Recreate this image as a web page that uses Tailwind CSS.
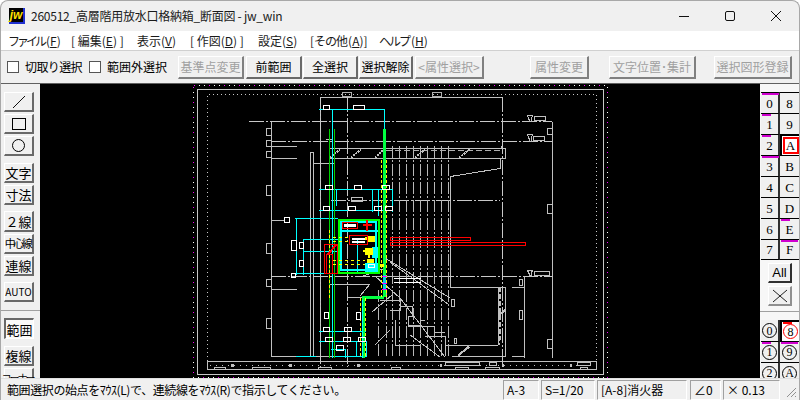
<!DOCTYPE html>
<html lang="ja">
<head>
  <meta charset="UTF-8" />
  <title>jw_win</title>
  <script src="https://cdn.jsdelivr.net/npm/@tailwindcss/browser@4"></script>
</head>
<body class="w-[800px] h-[400px] overflow-hidden bg-white text-black font-['Noto_Sans_CJK_JP','Liberation_Sans',sans-serif]">
  <div class="w-[800px] h-[400px] flex flex-col overflow-hidden rounded-t-lg border-t border-l border-r border-[#a8a8a8] bg-[#f0f0f0]">

    <!-- Title bar -->
    <div class="h-[30px] flex items-center shrink-0">
      <div class="ml-2 w-[16px] h-[16px] bg-black border-r-2 border-b-2 border-[#2030d0] flex items-center justify-center text-[12px] leading-none font-bold italic text-[#ffe000] font-['Liberation_Sans',sans-serif]">jw</div>
      <div class="ml-[6px] text-[12px] tracking-[-0.25px] leading-none text-[#1a1a1a]">260512_高層階用放水口格納箱_断面図 - jw_win</div>
      <div class="ml-auto flex items-center">
        <svg class="w-[46px] h-[30px]" viewBox="0 0 46 30"><path d="M18 15.5h10" stroke="#111" fill="none" /></svg>
        <svg class="w-[46px] h-[30px]" viewBox="0 0 46 30"><rect x="18.5" y="10.5" width="9" height="9" rx="1.5" stroke="#111" fill="none" /></svg>
        <svg class="w-[46px] h-[30px]" viewBox="0 0 46 30"><path d="M18 10l10 10M28 10l-10 10" stroke="#111" fill="none" /></svg>
      </div>
    </div>

    <!-- Menu -->
    <div class="h-[20px] bg-white flex items-center shrink-0 text-[12px] leading-none text-[#1a1a1a] border-b border-[#d0d0d0]">
      <span class="ml-[7px] w-[48px] whitespace-nowrap"><span class="tracking-[-3px]">ファイル</span><span class="ml-[2px]">(<u>F</u>)</span></span>
      <span class="ml-[15px] w-[51px] whitespace-nowrap">[ 編集(<u>E</u>) ]</span>
      <span class="ml-[15px] w-[37px] whitespace-nowrap">表示(<u>V</u>)</span>
      <span class="ml-[16px] w-[52px] whitespace-nowrap">[ 作図(<u>D</u>) ]</span>
      <span class="ml-[16px] w-[37px] whitespace-nowrap">設定(<u>S</u>)</span>
      <span class="ml-[15px] w-[53px] whitespace-nowrap">[<span class="tracking-[-1px]">その</span>他(<u>A</u>)]</span>
      <span class="ml-[16px] whitespace-nowrap"><span class="tracking-[-2px]">ヘルプ</span><span class="ml-[2px]">(<u>H</u>)</span></span>
    </div>

    <!-- Toolbar -->
    <div class="h-[33px] flex items-center shrink-0 text-[12px] leading-none border-b border-[#606060]">
      <div class="ml-[6px] w-[12px] h-[12px] bg-white border border-[#555]"></div>
      <span class="ml-[6px] w-[64px] whitespace-nowrap tracking-[-0.6px]">切取り選択</span>
      <div class="w-[12px] h-[12px] bg-white border border-[#555]"></div>
      <span class="ml-[6px] w-[71px] whitespace-nowrap">範囲外選択</span>
      <div class="w-[66px] h-[23px] flex items-center justify-center text-[#a0a0a0] border-t border-l border-white border-r-2 border-b-2 border-r-[#808080] border-b-[#808080]">基準点変更</div>
      <div class="ml-[2px] w-[56px] h-[23px] flex items-center justify-center border-t border-l border-white border-r-2 border-b-2 border-r-[#696969] border-b-[#696969]">前範囲</div>
      <div class="ml-[1px] w-[55px] h-[23px] flex items-center justify-center border-t border-l border-white border-r-2 border-b-2 border-r-[#696969] border-b-[#696969]">全選択</div>
      <div class="ml-[1px] w-[54px] h-[23px] flex items-center justify-center border-t border-l border-white border-r-2 border-b-2 border-r-[#696969] border-b-[#696969] whitespace-nowrap">選択解除</div>
      <div class="ml-[2px] w-[69px] h-[23px] flex items-center justify-center text-[#a0a0a0] border-t border-l border-white border-r-2 border-b-2 border-r-[#808080] border-b-[#808080] whitespace-nowrap">&lt;属性選択&gt;</div>
      <div class="ml-[46px] w-[59px] h-[23px] flex items-center justify-center text-[#a0a0a0] border-t border-l border-white border-r-2 border-b-2 border-r-[#808080] border-b-[#808080]">属性変更</div>
      <div class="ml-[20px] w-[87px] h-[23px] flex items-center justify-center text-[#a0a0a0] border-t border-l border-white border-r-2 border-b-2 border-r-[#808080] border-b-[#808080] whitespace-nowrap">文字位置･集計</div>
      <div class="ml-[18px] w-[78px] h-[23px] flex items-center justify-center text-[#a0a0a0] border-t border-l border-white border-r-2 border-b-2 border-r-[#808080] border-b-[#808080] whitespace-nowrap">選択図形登録</div>
    </div>

    <!-- Main -->
    <div class="flex h-[294px] shrink-0 overflow-hidden">

      <!-- Left tools -->
      <div class="w-[39px] shrink-0 flex flex-col items-start pl-[3px] pt-[8px] text-[13px] leading-none overflow-hidden *:shrink-0">
        <div class="w-[30px] h-[20px] flex items-center justify-center border-t border-l border-white border-r-2 border-b-2 border-r-[#696969] border-b-[#696969]">
          <svg class="w-[14px] h-[14px]" viewBox="0 0 14 14"><path d="M1 13L13 1" stroke="#111" fill="none" /></svg>
        </div>
        <div class="mt-[2px] w-[30px] h-[20px] flex items-center justify-center border-t border-l border-white border-r-2 border-b-2 border-r-[#696969] border-b-[#696969]">
          <div class="w-[14px] h-[12px] border border-black"></div>
        </div>
        <div class="mt-[2px] w-[30px] h-[20px] flex items-center justify-center border-t border-l border-white border-r-2 border-b-2 border-r-[#696969] border-b-[#696969]">
          <div class="w-[13px] h-[13px] rounded-full border border-black"></div>
        </div>
        <div class="mt-[7px] w-[30px] h-[20px] flex items-center justify-center border-t border-l border-white border-r-2 border-b-2 border-r-[#696969] border-b-[#696969]">文字</div>
        <div class="mt-[2px] w-[30px] h-[20px] flex items-center justify-center border-t border-l border-white border-r-2 border-b-2 border-r-[#696969] border-b-[#696969]">寸法</div>
        <div class="mt-[6px] w-[30px] h-[21px] flex items-center justify-center border-t border-l border-white border-r-2 border-b-2 border-r-[#696969] border-b-[#696969]">２線</div>
        <div class="mt-[2px] w-[30px] h-[20px] flex items-center justify-center border-t border-l border-white border-r-2 border-b-2 border-r-[#696969] border-b-[#696969] text-[11px] tracking-[-2.5px] whitespace-nowrap pr-[2px]">中心線</div>
        <div class="mt-[2px] w-[30px] h-[20px] flex items-center justify-center border-t border-l border-white border-r-2 border-b-2 border-r-[#696969] border-b-[#696969]">連線</div>
        <div class="mt-[6px] w-[30px] h-[20px] flex items-center justify-center border-t border-l border-white border-r-2 border-b-2 border-r-[#696969] border-b-[#696969] text-[10px] whitespace-nowrap">AUTO</div>
        <div class="mt-[8px] -ml-[3px] w-[39px] h-[1px] bg-[#a0a0a0]"></div>
        <div class="mt-[7px] w-[30px] h-[21px] flex items-center justify-center bg-[#fafafa] border-t-2 border-l-2 border-t-[#696969] border-l-[#696969] border-r border-b border-white">範囲</div>
        <div class="mt-[7px] w-[30px] h-[20px] flex items-center justify-center border-t border-l border-white border-r-2 border-b-2 border-r-[#696969] border-b-[#696969]">複線</div>
        <div class="mt-[2px] w-[30px] h-[20px] flex items-center justify-center border-t border-l border-white border-r-2 border-b-2 border-r-[#696969] border-b-[#696969] text-[10px] tracking-[-2px] whitespace-nowrap pr-[2px]">コーナー</div>
      </div>

      <!-- Drawing -->
      <svg class="w-[720px] h-[294px] shrink-0 bg-black" viewBox="40 84 720 294" shape-rendering="crispEdges" fill="none">
        <!-- sheet frame -->
        <rect x="193.5" y="85.5" width="414" height="292" stroke="#fff" stroke-dasharray="1 4" />
        <rect x="193.5" y="85.5" width="414" height="292" stroke="#f0f" stroke-dasharray="1 14" />
        <rect x="197.5" y="89.5" width="406" height="285" stroke="#c8c8c8" />
        <path d="M207.5 361V94.5H596.5V361" stroke="#c8c8c8" stroke-dasharray="1 3" />

        <!-- title strip -->
        <rect x="207.5" y="361.5" width="389" height="8" stroke="#c0c0c0" />
        <path d="M210 365.5H594" stroke="#c0c0c0" stroke-dasharray="1 5" />
        <path d="M214.5 369v-2h11v2M252.5 369v-2h18v2M318.5 369v-2h13v2M391.5 369v-2h9v2M455.5 369v-2h13v2M485.5 369v-2h14v2M580.5 369v-2h7v2M445.5 362.5h34v3h-34zM489.5 362.5h7v3h-7zM577.5 362.5h13v3h-13z" stroke="#c0c0c0" />
        <path d="M231 364h3v3h-3zM289 364h3v3h-3zM357 364h3v3h-3zM440 364h2v3h-2zM502 364h2v3h-2zM570 364h2v3h-2z" fill="#c0c0c0" />
        <rect x="342.5" y="92.5" width="9" height="3.5" stroke="#b0b0b0" />
        <rect x="432.5" y="92.5" width="9" height="3.5" stroke="#b0b0b0" />

        <!-- gray outline: solid -->
        <path d="M320.5 97.5H502.5M271.5 121.5V356M552.5 121.5V358M271 146.5H297M271 158.5H297M271 289.5H297M271 220.5H284M271 356.5H362M310 356V152.5H313.5V356M313.5 163.5H335M330 148.5H505.5V158.5H330M501.5 148.5V146M505.5 148.5V158.5M500 158.5V168.5L450.5 176.5V287M524.5 276V358M512 287.5H524.5M512 356.5H524.5M450 287.5H505.5V356.5H452M445 345.5H498M445 345.5V356M498 287V345M458 356L470 347M326 139H332V158M320.5 97.5V356" stroke="#c0c0c0" />
        <path d="M266.5 128.5h5v7h-5zM266.5 140.5h5v6h-5zM266.5 151.5h5v6h-5zM266.5 185.5h5v10h-5zM266.5 243.5h5v10h-5zM266.5 279.5h5v7h-5zM266.5 318.5h5v10h-5zM547.5 128.5h5v6h-5zM547.5 204.5h5v9h-5zM547.5 339.5h5v9h-5zM519.5 279.5h3v6h-3zM519.5 310.5h3v9h-3zM351.5 197.5h11v4h-11zM454.5 338.5h2v5h-2z" stroke="#c0c0c0" />

        <!-- dash-dot grid lines -->
        <path d="M249 121.5H552M271 141.5H552M271 276.5H552M502.5 97V367M320.5 97V367M347.5 97V367M331 200.5H500" stroke="#c8c8c8" stroke-dasharray="15 2 2 2" />

        <!-- level marks -->
        <path d="M527.5 115.5h5l-1.5 4v2h-2v-2zM527.5 134.5h5l-1.5 4v3h-2v-3zM527.5 270.5h5l-1.5 3v2h-2v-2z" stroke="#c0c0c0" />
        <path d="M534.5 116.5h11v3.5h-11zM533.5 136.5h11v3.5h-11zM534.5 271.5h15v3.5h-15z" stroke="#c0c0c0" />

        <!-- stairs -->
        <path d="M399.5 146V358M406.5 146V358M413.5 146V358M420.5 146V358M427.5 146V358M434.5 146V358M441.5 146V358M448.5 146V358M392.5 146V358M378.5 290V358M386.5 290V358" stroke="#b8b8b8" stroke-dasharray="12 2 2 2" />
        <path d="M386 150.5H500" stroke="#b0b0b0" stroke-dasharray="6 3" />
        <path d="M415 158L425 149M459 158L470 149M351 158L361 149M330 158L340 149M375 158L383 150" stroke="#c0c0c0" stroke-width="2" stroke-dasharray="2 1" />
        <path d="M385 258L450 298M400 298L445 357M375 276L400 298M390 262L448 304" stroke="#c0c0c0" />
        <path d="M400.5 306H412V316H408V325H420V320H425V320M408 326H434M434 326V332H445M425 336H445V345M395 320V345H420M380 300H400V310H390M410 335L440 357M363 276L383 269M400 276H372M330 284H370M370 284L360 296M348 297H380M392 295L372 312M390 330L375 345" stroke="#c0c0c0" />
        <path d="M500 287V340M499 287V345" stroke="#c0c0c0" stroke-dasharray="5 2" />
        <path d="M498 316L505 310M458 356L469 346" stroke="#c0c0c0" stroke-width="2" />
        <path d="M451 299h3v7h-3z" stroke="#c0c0c0" />
        <path d="M393.5 278.5h27M393.5 282.5h27" stroke="#fff" />

        <!-- cyan pipes -->
        <path d="M319 109.5H384.5M332.5 109.5V358M384.5 109.5V210M319 189.5H392M319 210.5H392M295 218.5H338M296.5 218.5V275M303.5 239.5V275M303 239.5H338M303 251.5H338M296 273.5H338M319 331.5H366M319 341.5H366M331 349.5H346M335 356.5H366M296 356.5H316M345.5 349V358M356.5 341V356M366.5 341V357M378.5 189V216M392.5 189V212M336.5 189V206M372.5 190V212M357 240V272" stroke="#00ffff" />
        <path d="M338 231H378" stroke="#00ffff" stroke-width="2" />

        <!-- green -->
        <path d="M329.5 129V358M334.5 129V358" stroke="#00d000" />
        <path d="M384 129V297" stroke="#00ff40" stroke-width="3" />
        <path d="M384 297H363V358" stroke="#00ff40" stroke-width="3" />
        <path d="M362.5 300V358" stroke="#00ffff" />
        <path d="M338.5 219.5H378.5V272.5H338.5Z" stroke="#00ff00" stroke-width="2" />
        <path d="M341 222H376V270H341Z" stroke="#00ffff" stroke-width="2" />

        <!-- cyan fills -->
        <path d="M372 247h6v11h-6zM365 263h13v9h-13z" fill="#00ffff" />
        <path d="M380 264h4v3h-4z" fill="#ffff00" />

        <!-- yellow dashed -->
        <path d="M381.5 160V297M386.5 160V297M329.5 230V300M360 298V358M365.5 298V358" stroke="#ffff00" stroke-dasharray="3 2" />
        <path d="M333 237.5H350M333 241.5H350M333 260.5H365M333 264.5H365" stroke="#ffff00" stroke-dasharray="3 3" />
        <path d="M367 236h8v6h-8zM365 248h8v7h-8zM363 250h2v2h-2zM367 259h7v4h-7zM368 255h2v3h-2zM365 237h2v3h-2z" fill="#ffff00" />

        <!-- magenta joint -->
        <path d="M383 275h3v15h-3z" fill="#00c8e8" />
        <path d="M382 276H387M382 283H387M382 289H387" stroke="#ff00ff" />

        <!-- red -->
        <path d="M342.5 222.5h15v6h-15zM349.5 235.5h18v9h-18zM324.5 244.5h13v29h-13zM326.5 254.5h6v19h-6zM390.5 237.5h80v3h-80zM390.5 242.5h135v3h-135z" stroke="#ff0000" />
        <path d="M363 224.5H372M366.5 220V231M337 244L328 254" stroke="#ff0000" stroke-width="2" />

        <!-- white fixtures -->
        <path d="M344 224h12v3h-12zM352 238h13v2h-13zM352 241h13v2h-13z" fill="#fff" />
        <path d="M323.5 105.5h6v4h-6zM353.5 105.5h11v4h-11zM325.5 185.5h7v4h-7zM354.5 185.5h7v4h-7zM382.5 185.5h7v4h-7zM323.5 206.5h6v4h-6zM348.5 206.5h7v4h-7zM374.5 206.5h7v4h-7zM385.5 206.5h7v4h-7zM284.5 217.5h5v5h-5zM291.5 240.5h5v10h-5zM299.5 242.5h4v6h-4zM299.5 260.5h4v6h-4zM291.5 273.5h4v4h-4zM324.5 312.5h4v6h-4zM356.5 312.5h4v7h-4zM323.5 327.5h6v4h-6zM344.5 327.5h7v4h-7zM325.5 337.5h7v4h-7zM343.5 337.5h7v4h-7zM358.5 337.5h7v4h-7zM336.5 345.5h7v5h-7zM368.5 264.5h6v3h-6z" stroke="#fff" />
      </svg>

      <!-- Right layers -->
      <div class="flex-1 bg-[#f7f7f7] pt-[8px] pl-[1px] flex flex-col text-[13px] leading-none font-['Liberation_Serif','Noto_Sans_CJK_JP',serif] overflow-hidden *:shrink-0">
        <div class="grid grid-cols-[19px_19px] auto-rows-[21px]">
          <div class="relative flex items-center justify-center bg-[#f0f0f0] border-t border-black border-r-2 border-r-[#303030]"><span class="absolute left-[1px] top-0 w-[17px] h-[2px] bg-[#d000d0]"></span>0</div>
          <div class="flex items-center justify-center bg-[#f0f0f0] border-t border-black">8</div>
          <div class="relative flex items-center justify-center bg-[#f0f0f0] border-t border-black border-r-2 border-r-[#303030]"><span class="absolute left-[1px] top-0 w-[9px] h-[2px] bg-[#d000d0]"></span>1</div>
          <div class="flex items-center justify-center bg-[#f0f0f0] border-t border-black">9</div>
          <div class="relative flex items-center justify-center bg-[#f0f0f0] border-t border-black border-r-2 border-r-[#303030]"><span class="absolute left-[1px] top-0 w-[9px] h-[2px] bg-[#d000d0]"></span>2</div>
          <div class="flex items-center justify-center bg-white border-t-2 border-l-2 border-black"><span class="w-[16px] h-[17px] flex items-center justify-center border-2 border-[#f00]">A</span></div>
          <div class="relative flex items-center justify-center bg-[#f0f0f0] border-t border-black border-r-2 border-r-[#303030]"><span class="absolute left-[1px] top-0 w-[17px] h-[2px] bg-[#d000d0]"></span>3</div>
          <div class="flex items-center justify-center bg-[#f0f0f0] border-t border-black">B</div>
          <div class="flex items-center justify-center bg-[#f0f0f0] border-t border-black border-r-2 border-r-[#303030]">4</div>
          <div class="flex items-center justify-center bg-[#f0f0f0] border-t border-black">C</div>
          <div class="flex items-center justify-center bg-[#f0f0f0] border-t border-black border-r-2 border-r-[#303030]">5</div>
          <div class="flex items-center justify-center bg-[#f0f0f0] border-t border-black">D</div>
          <div class="flex items-center justify-center bg-[#f0f0f0] border-t border-black border-r-2 border-r-[#303030]">6</div>
          <div class="relative flex items-center justify-center bg-[#f0f0f0] border-t border-black"><span class="absolute left-[1px] top-0 w-[9px] h-[2px] bg-[#d000d0]"></span>E</div>
          <div class="flex items-center justify-center bg-[#f0f0f0] border-t border-b border-black border-r-2 border-r-[#303030]">7</div>
          <div class="relative flex items-center justify-center bg-[#f0f0f0] border-t border-b border-black"><span class="absolute left-[1px] top-0 w-[17px] h-[2px] bg-[#d000d0]"></span>F</div>
        </div>
        <div class="mt-[3px] ml-[7px] w-[24px] h-[20px] flex items-center justify-center bg-[#f0f0f0] border-t border-l border-white border-r-2 border-b-2 border-r-[#303030] border-b-[#303030] font-['Liberation_Sans',sans-serif] text-[13px]">All</div>
        <div class="mt-[3px] ml-[7px] w-[24px] h-[20px] flex items-center justify-center bg-[#f0f0f0] border-t border-l border-white border-r-2 border-b-2 border-r-[#909090] border-b-[#909090]">
          <svg class="w-[14px] h-[14px]" viewBox="0 0 14 14"><path d="M0 1L14 13M14 1L0 13" stroke="#222" fill="none" /></svg>
        </div>
        <div class="mt-[5px] -ml-[1px] h-[1px] bg-[#a0a0a0]"></div>
        <div class="mt-[8px] grid grid-cols-[19px_19px] auto-rows-[21px]">
          <div class="flex items-center justify-center bg-[#f0f0f0] border-r-2 border-r-[#303030]"><span class="w-[15px] h-[15px] rounded-full border border-black flex items-center justify-center text-[12px]">0</span></div>
          <div class="relative flex items-center justify-center bg-white border-t-2 border-l-2 border-black"><span class="absolute left-[1px] top-0 w-[9px] h-[2px] bg-[#f00]"></span><span class="w-[15px] h-[15px] rounded-full border border-[#f00] flex items-center justify-center text-[12px]">8</span></div>
          <div class="relative flex items-center justify-center bg-[#f0f0f0] border-t border-black border-r-2 border-r-[#303030]"><span class="absolute left-[1px] top-0 w-[9px] h-[2px] bg-[#d000d0]"></span><span class="w-[15px] h-[15px] rounded-full border border-black flex items-center justify-center text-[12px]">1</span></div>
          <div class="relative flex items-center justify-center bg-[#f0f0f0] border-t border-black"><span class="absolute left-[1px] top-0 w-[17px] h-[2px] bg-[#d000d0]"></span><span class="w-[15px] h-[15px] rounded-full border border-black flex items-center justify-center text-[12px]">9</span></div>
          <div class="flex items-center justify-center bg-[#f0f0f0] border-t border-black border-r-2 border-r-[#303030]"><span class="w-[15px] h-[15px] rounded-full border border-black flex items-center justify-center text-[12px]">2</span></div>
          <div class="flex items-center justify-center bg-[#f0f0f0] border-t border-black"><span class="w-[15px] h-[15px] rounded-full border border-black flex items-center justify-center text-[12px]">A</span></div>
        </div>
      </div>
    </div>

    <!-- Status bar -->
    <div class="relative flex-1 flex items-center text-[12px] leading-none border-t border-[#e0e0e0]">
      <div class="ml-[6px] w-[496px] whitespace-nowrap tracking-[-0.4px]">範囲選択の始点をﾏｳｽ(L)で、連続線をﾏｳｽ(R)で指示してください。</div>
      <div class="w-[36px] h-[20px] flex items-center pl-[3px] border-t border-l border-[#a0a0a0] border-b border-b-white border-r border-r-white">A-3</div>
      <div class="ml-[2px] w-[54px] h-[20px] flex items-center pl-[3px] border-t border-l border-[#a0a0a0] border-b border-b-white border-r border-r-white">S=1/20</div>
      <div class="ml-[2px] w-[90px] h-[20px] flex items-center pl-[3px] border-t border-l border-[#a0a0a0] border-b border-b-white border-r border-r-white whitespace-nowrap">[A-8]消火器</div>
      <div class="ml-[3px] w-[31px] h-[20px] flex items-center pl-[3px] border-t border-l border-[#a0a0a0] border-b border-b-white border-r border-r-white">∠0</div>
      <div class="ml-[2px] w-[57px] h-[20px] flex items-center pl-[3px] border-t border-l border-[#a0a0a0] border-b border-b-white border-r border-r-white whitespace-nowrap">× 0.13</div>
      <svg class="absolute right-[2px] bottom-[2px] w-[12px] h-[12px]" viewBox="0 0 12 12"><path d="M11 2L2 11M11 6L6 11M11 10L10 11" stroke="#909090" fill="none" /></svg>
    </div>
  </div>
</body>
</html>
